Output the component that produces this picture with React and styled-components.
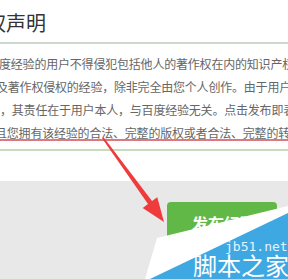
import React from 'react';
import styled, { createGlobalStyle } from 'styled-components';

const GlobalStyle = createGlobalStyle`
  html, body {
    margin: 0;
    padding: 0;
    background: #fff;
    overflow: hidden;
  }
  body {
    font-family: "Noto Sans CJK SC", "Noto Sans", sans-serif;
  }
`;

const lines = [
  { text: '度经验的用户不得侵犯包括他人的著作权在内的知识产权', shift: -1 },
  { text: '及著作权侵权的经验，除非完全由您个人创作。由于用户', shift: -4 },
  { text: '，其责任在于用户本人，与百度经验无关。点击发布即表示', shift: 0 },
  { text: '且您拥有该经验的合法、完整的版权或者合法、完整的转载', shift: -5 },
];

const App = () => {
  return (
    <Page>
      <GlobalStyle />
      <Header>
        <Title>版权声明</Title>
      </Header>
      <Divider />
      <Copy>
        {lines.map((l, i) => (
          <Line key={i} $shift={l.shift}>{l.text}</Line>
        ))}
      </Copy>
      <RedRule />
      <GreenRule />
      <Spacer />
      <ActionBar>
        <PublishButton>发布经验</PublishButton>
      </ActionBar>

      <Overlay width="288" height="279" viewBox="0 0 288 279">
        {/* red annotation arrow */}
        <polygon
          fill="#ef3b3b"
          points="103.8,137.4 152,201.1 157.3,197.3 164,222 142.7,207.9 148,204.1 102.2,138.6"
        />
        {/* watermark shapes */}
        <polygon fill="#ffffff" points="157,238 288,206 288,214 150,279 145,279" />
        <polygon fill="#3ea8e2" points="150,279 288,213 288,279" />
      </Overlay>
      <MarkSite>jb51.net</MarkSite>
      <MarkName>脚本之家</MarkName>
    </Page>
  );
};

const Page = styled.div`
  position: relative;
  width: 288px;
  height: 279px;
  overflow: hidden;
  background: #fff;
  display: flex;
  flex-direction: column;
`;

const Header = styled.div`
  height: 42px;
  padding-top: 13px;
  box-sizing: border-box;
`;

const Title = styled.div`
  margin-left: -34px;
  font-size: 20px;
  line-height: 20px;
  color: #333;
  white-space: nowrap;
`;

const Divider = styled.div`
  height: 2px;
  background: #cdd8cc;
`;

const Copy = styled.div`
  padding-top: 8px;
`;

const Line = styled.div`
  margin-left: ${(p) => p.$shift}px;
  font-size: 12px;
  line-height: 23px;
  letter-spacing: -0.2px;
  color: #666;
  white-space: nowrap;
`;

const RedRule = styled.div`
  margin-top: -5px;
  height: 2px;
  background: #dc7880;
`;

const GreenRule = styled.div`
  margin-top: 8px;
  height: 2px;
  background: #c6dcbd;
`;

const Spacer = styled.div`
  height: 30px;
`;

const ActionBar = styled.div`
  flex: 1;
  background: #e8e8e8;
  padding: 21px 0 0 167px;
`;

const PublishButton = styled.div`
  width: 110px;
  height: 42px;
  border-radius: 4px;
  background: #62b846;
  color: #fff;
  font-size: 16px;
  font-weight: bold;
  display: flex;
  align-items: center;
  justify-content: center;
  padding-left: 4px;
  box-sizing: border-box;
`;

const Overlay = styled.svg`
  position: absolute;
  left: 0;
  top: 0;
  pointer-events: none;
`;

const MarkSite = styled.span`
  position: absolute;
  left: 225px;
  top: 238px;
  font-family: "DejaVu Sans Mono", monospace;
  font-size: 13px;
  line-height: 18px;
  color: #e6f3ff;
`;

const MarkName = styled.span`
  position: absolute;
  left: 193px;
  top: 251px;
  font-size: 24px;
  line-height: 28px;
  color: #fff;
  white-space: nowrap;
`;

export default App;
